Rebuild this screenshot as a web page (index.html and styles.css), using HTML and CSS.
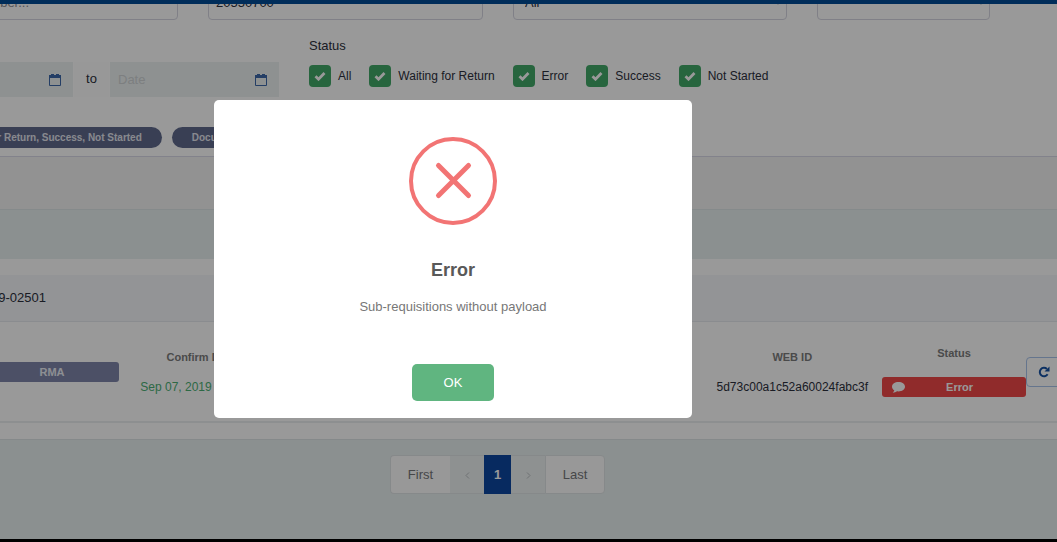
FILE: index.html
```html
<!DOCTYPE html>
<html lang="en">
<head>
<meta charset="utf-8">
<meta name="viewport" content="width=device-width, initial-scale=1">
<title>Requisitions</title>
<link rel="stylesheet" href="styles.css">
</head>
<body>
<svg class="sprite" aria-hidden="true">
  <symbol id="calendar" viewBox="0 0 12 12"><path d="M.5 2.500h11v9H.5z" fill="none" stroke="currentColor"/><path d="M0 1h12v3H0zM2 0h3v3h-3zM7 0h3v3h-3z" fill="currentColor"/></symbol>
  <symbol id="check" viewBox="0 0 12 10"><path d="M1.500 5.200l3 3L10.500 2" fill="none" stroke="currentColor" stroke-width="2.800"/></symbol>
</svg>

<header class="topbar"></header>

<main class="page">
  <form class="filters">
    <div class="fields">
      <input class="field" type="text" placeholder="Document number..." aria-label="Document number">
      <input class="field" type="text" value="20550700" aria-label="Requisition">
      <select class="field" aria-label="Type"><option>All</option></select>
      <select class="field" aria-label="Group"><option></option></select>
    </div>

    <div class="criteria">
      <div class="dates">
        <div class="date"><input type="text" aria-label="Start date"><svg class="calendar"><use href="#calendar"/></svg></div>
        <span class="to">to</span>
        <div class="date"><input type="text" placeholder="Date" aria-label="End date"><svg class="calendar"><use href="#calendar"/></svg></div>
      </div>
      <fieldset class="status">
        <legend>Status</legend>
        <div class="checks">
          <label class="check"><input type="checkbox" checked><span class="box"><svg><use href="#check"/></svg></span>All</label>
          <label class="check"><input type="checkbox" checked><span class="box"><svg><use href="#check"/></svg></span>Waiting for Return</label>
          <label class="check"><input type="checkbox" checked><span class="box"><svg><use href="#check"/></svg></span>Error</label>
          <label class="check"><input type="checkbox" checked><span class="box"><svg><use href="#check"/></svg></span>Success</label>
          <label class="check"><input type="checkbox" checked><span class="box"><svg><use href="#check"/></svg></span>Not Started</label>
        </div>
      </fieldset>
    </div>

    <div class="chips">
      <span class="chip">All, Waiting for Return, Success, Not Started</span>
      <span class="chip">Document Type</span>
    </div>
  </form>

  <div class="toolbar"></div>

  <section class="card">
    <h2 class="card-title">REQ-2019-02501</h2>
    <div class="details">
      <span class="badge rma">RMA</span>
      <div class="cell"><span class="caption">Confirm Date</span><span class="confirmed">Sep 07, 2019 12:40:15</span></div>
      <div class="cell web"><span class="caption">WEB ID</span><span class="ident">5d73c00a1c52a60024fabc3f</span></div>
      <div class="cell state"><span class="caption">Status</span>
        <span class="badge error"><svg class="bubble" viewBox="0 0 13 11"><path d="M6.500 0C2.900 0 0 2.100 0 4.700c0 1.500.9 2.800 2.300 3.600C2.100 9.300 1.500 10 .8 10.800c1.800-.1 3.200-.7 4.200-1.500.5.100 1 .1 1.500.1 3.600 0 6.500-2.100 6.500-4.700S10.100 0 6.500 0z" fill="currentColor"/></svg>Error</span>
      </div>
      <button class="refresh" type="button" aria-label="Refresh"><svg viewBox="0 0 12 12"><path d="M9.600 8.200A4.200 4.200 0 1 1 8.900 3" fill="none" stroke="currentColor" stroke-width="2"/><path d="M11.500.5v5h-5z" fill="currentColor"/></svg></button>
    </div>
  </section>

  <nav class="pager" aria-label="Pages">
    <button type="button" class="edge">First</button>
    <button type="button" class="step" disabled aria-label="Previous"><svg viewBox="0 0 5 7"><path d="M4 .5l-3 3 3 3" fill="none" stroke="currentColor"/></svg></button>
    <button type="button" class="current">1</button>
    <button type="button" class="step" disabled aria-label="Next"><svg viewBox="0 0 5 7"><path d="M1 .5l3 3-3 3" fill="none" stroke="currentColor"/></svg></button>
    <button type="button" class="edge">Last</button>
  </nav>
</main>

<div class="overlay">
  <div class="modal" role="alertdialog" aria-labelledby="modal-title" aria-describedby="modal-text">
    <svg class="modal-icon" viewBox="0 0 88 88"><circle cx="44" cy="44" r="42" fill="none" stroke="#f27474" stroke-width="4"/><path d="M29.500 28.500l30 30M59.500 28.500l-30 30" stroke="#f27474" stroke-width="5" stroke-linecap="round"/></svg>
    <h1 id="modal-title">Error</h1>
    <p id="modal-text">Sub-requisitions without payload</p>
    <button class="ok" type="button">OK</button>
  </div>
</div>
</body>
</html>
```
FILE: styles.css
```css
* { box-sizing: border-box; }

body {
  margin: 0;
  min-height: 100vh;
  display: flex;
  flex-direction: column;
  overflow: hidden;
  border-bottom: 3px solid #000;
  background: #e8f0f0;
  color: #2c2f3c;
  font: 12px/16px "Liberation Sans", Arial, sans-serif;
}

input, select, button { font: inherit; color: inherit; }

.sprite { position: absolute; width: 0; height: 0; }

.topbar {
  position: fixed;
  top: 0;
  left: 0;
  right: 0;
  height: 4px;
  background: #004b97;
}

/* The page is scrolled a little way down and to the right. */
.page {
  flex: 1;
  margin: -18px -26px 0 -96px;
}

.filters {
  padding: 0 0 8px;
  background: #fff;
  border-bottom: 1px solid #d9d9e8;
}

.fields {
  display: grid;
  grid-template-columns: 274fr 275fr 274fr 173fr;
  gap: 30px;
  padding-right: 93px;
}

.field {
  width: 100%;
  min-width: 0;
  height: 38px;
  padding: 3px 7px 0;
  border: 1px solid #d6d6e2;
  border-radius: 4px;
  background: #fff;
  font-size: 13px;
}

.field::placeholder { color: #8b8b93; }

.criteria {
  display: grid;
  grid-template-columns: 375px 1fr;
  gap: 30px;
  align-items: end;
  padding-top: 18px;
}

.dates { display: flex; gap: 1px; }

.date {
  flex: 1;
  min-width: 0;
  display: flex;
  align-items: center;
  height: 35px;
  padding: 0 12px 0 8px;
  background: #edf2f2;
}

.date input {
  flex: 1;
  min-width: 0;
  border: 0;
  padding: 0;
  background: none;
  font-size: 13px;
}

.date input::placeholder { color: #d0d4d6; }

.calendar { flex: none; width: 12px; height: 12px; color: #3c68a8; }

.to {
  flex: none;
  width: 35px;
  background: #fdfdfd;
  font-size: 13px;
  line-height: 34px;
  text-align: center;
}

.status { border: 0; margin: 0; padding: 0 0 10px; }
.status legend { padding: 0; font-size: 13px; }

.checks { display: flex; gap: 18px; padding-top: 11px; }

.check { display: flex; align-items: center; gap: 7px; }
.check input { position: absolute; opacity: 0; }

.box {
  display: grid;
  place-items: center;
  width: 22px;
  height: 22px;
  border-radius: 4px;
  background: #41a868;
  color: #fff;
}

.box svg { width: 12px; height: 10px; }

.chips { display: flex; gap: 10px; padding: 30px 0 0 7px; }

.chip {
  padding: 0 20px;
  border-radius: 12px;
  background: #5f698d;
  color: #e3e5ee;
  font-size: 10px;
  font-weight: bold;
  line-height: 21px;
}

.toolbar {
  height: 53px;
  margin-bottom: 49px;
  border-bottom: 1px solid #dee6e8;
  background: #f4f4f4;
}

.card {
  padding: 16px 0;
  border-bottom: 1px solid #dee4e6;
  background: #fff;
}

.card-title {
  margin: 0;
  padding: 0 40px;
  border-bottom: 1px solid #e6eaee;
  background: #f5f7fa;
  font-size: 13px;
  font-weight: normal;
  line-height: 46px;
}

.details {
  display: flex;
  align-items: center;
  height: 101px;
  padding: 0 21px 0 81px;
  border-bottom: 2px solid #eceff0;
}

.cell {
  display: flex;
  flex-direction: column;
  align-items: center;
  gap: 14px;
}

.cell .caption { color: #7c7c7c; font-size: 11px; font-weight: bold; }
.rma + .cell { width: 122px; margin-left: 21px; }
.web { margin-left: auto; }
.confirmed { color: #4caf74; white-space: nowrap; }
.state { gap: 16px; width: 144px; margin-left: 14px; padding-bottom: 1px; }

.badge {
  display: block;
  border-radius: 3px;
  color: #fff;
  font-size: 11px;
  font-weight: bold;
  line-height: 20px;
  text-align: center;
}

.rma { width: 134px; background: #7f86ab; color: #eceef5; }

.error {
  display: flex;
  align-items: center;
  justify-content: space-between;
  width: 100%;
  padding: 0 53px 0 10px;
  background: #f04848;
}

.bubble { width: 13px; height: 11px; }

.refresh {
  display: grid;
  place-items: center;
  width: 36px;
  height: 30px;
  padding: 0;
  border: 1px solid #a9c4ec;
  border-radius: 4px;
  background: #fff;
  color: #1450a4;
}

.refresh svg { width: 12px; height: 12px; }

.pager { display: flex; justify-content: center; padding: 15px 0 0 8px; }

.pager button {
  height: 39px;
  padding: 0;
  border: 1px solid #dfe4e6;
  background: #fdfdfd;
  color: #75777a;
  font-size: 13px;
}

.pager .edge { width: 60px; }
.pager .edge:first-child { border-right: 0; border-radius: 4px 0 0 4px; }
.pager .edge:last-child { border-radius: 0 4px 4px 0; }
.pager .step { width: 34px; border-width: 1px 0; background: #edf2f2; color: #b8bdc0; }
.pager .step svg { width: 5px; height: 7px; }
.pager .current { width: 27px; border: 0; background: #0d47a1; color: #fff; font-weight: bold; }

.overlay {
  position: fixed;
  inset: 0;
  display: flex;
  align-items: center;
  justify-content: center;
  padding: 0 151px 24px 0;
  background: rgba(0, 0, 0, .4);
}

.modal {
  display: flex;
  flex-direction: column;
  align-items: center;
  width: 478px;
  padding: 37px 20px 17px;
  border-radius: 5px;
  background: #fff;
}

.modal-icon { width: 88px; height: 88px; }

.modal h1 {
  margin: 32px 0 0;
  color: #595959;
  font-size: 18px;
  line-height: 26px;
}

.modal p {
  margin: 16px 0 49px;
  color: #777;
  font-size: 13px;
}

.ok {
  width: 82px;
  height: 37px;
  border: 0;
  border-radius: 5px;
  background: #60b580;
  color: #fff;
  font-size: 13px;
}
```
